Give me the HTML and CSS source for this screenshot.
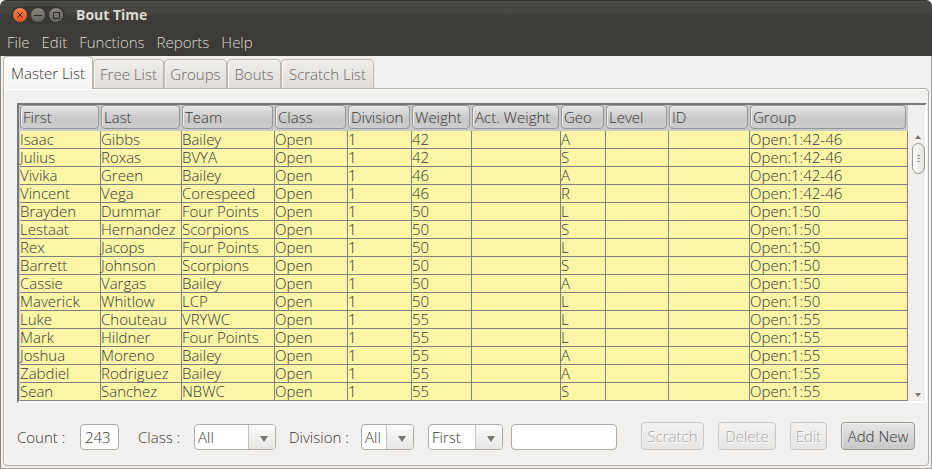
FILE: index.html
```html
<!DOCTYPE html>
<html lang="en">
<head>
<meta charset="utf-8">
<title>Bout Time</title>
<link rel="stylesheet" href="styles.css">
</head>
<body>
<div class="window">
  <header class="chrome">
    <div class="titlebar">
      <div class="controls">
        <button class="control close" aria-label="Close"><svg viewBox="0 0 14 14"><path d="M4.5 4.5l5 5M9.500 4.5l-5 5"/></svg></button>
        <button class="control" aria-label="Minimize"><svg viewBox="0 0 14 14"><path d="M3 7.500h8"/></svg></button>
        <button class="control" aria-label="Maximize"><svg viewBox="0 0 14 14"><path d="M4.5 4.5h6v6h-6z"/></svg></button>
      </div>
      <h1 class="title">Bout Time</h1>
    </div>
    <nav class="menubar">
      <button>File</button><button>Edit</button><button>Functions</button><button>Reports</button><button>Help</button>
    </nav>
  </header>
  <main class="content">
    <div class="tabs" role="tablist">
      <button class="tab active tab-master" role="tab" aria-selected="true">Master List</button>
      <button class="tab tab-free" role="tab">Free List</button>
      <button class="tab tab-groups" role="tab">Groups</button>
      <button class="tab tab-bouts" role="tab">Bouts</button>
      <button class="tab tab-scratch" role="tab">Scratch List</button>
    </div>
    <section class="panel">
      <div class="grid-frame">
        <table class="roster">
          <colgroup>
            <col class="c-name"><col class="c-name"><col class="c-team"><col class="c-class"><col class="c-division"><col class="c-weight"><col class="c-actual"><col class="c-geo"><col class="c-level"><col class="c-id"><col>
          </colgroup>
          <thead>
            <tr><th><button>First</button></th><th><button>Last</button></th><th><button>Team</button></th><th><button>Class</button></th><th><button>Division</button></th><th><button>Weight</button></th><th><button>Act. Weight</button></th><th><button>Geo</button></th><th><button>Level</button></th><th><button>ID</button></th><th><button>Group</button></th></tr>
          </thead>
          <tbody>
            <tr><td>Isaac</td><td>Gibbs</td><td>Bailey</td><td>Open</td><td>1</td><td>42</td><td></td><td>A</td><td></td><td></td><td>Open:1:42-46</td></tr>
            <tr><td>Julius</td><td>Roxas</td><td>BVYA</td><td>Open</td><td>1</td><td>42</td><td></td><td>S</td><td></td><td></td><td>Open:1:42-46</td></tr>
            <tr><td>Vivika</td><td>Green</td><td>Bailey</td><td>Open</td><td>1</td><td>46</td><td></td><td>A</td><td></td><td></td><td>Open:1:42-46</td></tr>
            <tr><td>Vincent</td><td>Vega</td><td>Corespeed</td><td>Open</td><td>1</td><td>46</td><td></td><td>R</td><td></td><td></td><td>Open:1:42-46</td></tr>
            <tr><td>Brayden</td><td>Dummar</td><td>Four Points</td><td>Open</td><td>1</td><td>50</td><td></td><td>L</td><td></td><td></td><td>Open:1:50</td></tr>
            <tr><td>Lestaat</td><td>Hernandez</td><td>Scorpions</td><td>Open</td><td>1</td><td>50</td><td></td><td>S</td><td></td><td></td><td>Open:1:50</td></tr>
            <tr><td>Rex</td><td>Jacops</td><td>Four Points</td><td>Open</td><td>1</td><td>50</td><td></td><td>L</td><td></td><td></td><td>Open:1:50</td></tr>
            <tr><td>Barrett</td><td>Johnson</td><td>Scorpions</td><td>Open</td><td>1</td><td>50</td><td></td><td>S</td><td></td><td></td><td>Open:1:50</td></tr>
            <tr><td>Cassie</td><td>Vargas</td><td>Bailey</td><td>Open</td><td>1</td><td>50</td><td></td><td>A</td><td></td><td></td><td>Open:1:50</td></tr>
            <tr><td>Maverick</td><td>Whitlow</td><td>LCP</td><td>Open</td><td>1</td><td>50</td><td></td><td>L</td><td></td><td></td><td>Open:1:50</td></tr>
            <tr><td>Luke</td><td>Chouteau</td><td>VRYWC</td><td>Open</td><td>1</td><td>55</td><td></td><td>L</td><td></td><td></td><td>Open:1:55</td></tr>
            <tr><td>Mark</td><td>Hildner</td><td>Four Points</td><td>Open</td><td>1</td><td>55</td><td></td><td>L</td><td></td><td></td><td>Open:1:55</td></tr>
            <tr><td>Joshua</td><td>Moreno</td><td>Bailey</td><td>Open</td><td>1</td><td>55</td><td></td><td>A</td><td></td><td></td><td>Open:1:55</td></tr>
            <tr><td>Zabdiel</td><td>Rodriguez</td><td>Bailey</td><td>Open</td><td>1</td><td>55</td><td></td><td>A</td><td></td><td></td><td>Open:1:55</td></tr>
            <tr><td>Sean</td><td>Sanchez</td><td>NBWC</td><td>Open</td><td>1</td><td>55</td><td></td><td>S</td><td></td><td></td><td>Open:1:55</td></tr>
          </tbody>
        </table>
        <div class="scrollbar">
          <button class="step up" aria-label="Scroll up"></button>
          <div class="thumb"><i></i><i></i><i></i></div>
          <button class="step down" aria-label="Scroll down"></button>
        </div>
      </div>
      <form class="toolbar">
        <label class="lbl-count" for="count">Count :</label>
        <input class="field count" id="count" type="text" value="243" readonly>
        <label class="lbl-class" for="class">Class :</label>
        <span class="combo combo-class"><select id="class"><option>All</option></select></span>
        <label class="lbl-division" for="division">Division :</label>
        <span class="combo combo-division"><select id="division"><option>All</option></select></span>
        <span class="combo combo-search"><select aria-label="Search column"><option>First</option></select></span>
        <input class="field search" type="text" aria-label="Search text">
        <div class="actions">
          <button class="action scratch" type="button" disabled>Scratch</button>
          <button class="action delete" type="button" disabled>Delete</button>
          <button class="action edit" type="button" disabled>Edit</button>
          <button class="action add" type="button">Add New</button>
        </div>
      </form>
    </section>
  </main>
</div>
</body>
</html>
```

FILE: styles.css
```css
* { box-sizing: border-box; }

body {
  margin: 0;
  background: #fff;
  color: #383532;
  font: 300 15px/18px "Open Sans", "Noto Sans", sans-serif;
}

button, input, select {
  margin: 0;
  padding: 0;
  border: 0;
  background: none;
  color: inherit;
  font: inherit;
}

.window {
  display: flex;
  flex-direction: column;
  min-height: 100vh;
  overflow: hidden;
  border-radius: 6px 6px 0 0;
  background: #f1f0ee;
}

/* Title bar and menus */
.chrome {
  height: 56px;
  border-top: 1px solid #32312d;
  background: linear-gradient(#5b5a54 0, #484742 1px, #464540 12px, #3c3b37 15px);
  color: #dfdbd2;
}

.titlebar {
  display: flex;
  align-items: center;
  gap: 11px;
  height: 27px;
  padding-left: 11px;
}

.controls {
  display: flex;
  gap: 2px;
  padding: 1px;
  border-radius: 9px;
  background: #383733;
}

.control {
  width: 16px;
  height: 16px;
  border: 1px solid #383733;
  border-radius: 50%;
  background: linear-gradient(#8a8880, #62615b);
}

.control.close { background: linear-gradient(#f58254, #e2531c); }

.control svg {
  display: block;
  width: 14px;
  height: 14px;
  fill: none;
  stroke: #2b2a26;
  stroke-width: 1;
}

.title {
  margin: 0;
  font-size: 14px;
  font-weight: 700;
}

.menubar {
  display: flex;
  gap: 12px;
  padding: 5px 7px 0;
}

/* Tabs */
.content {
  flex: 1;
  display: flex;
  flex-direction: column;
  padding: 0 2px 2px;
  border: 1px solid #a5a19c;
  border-top: 0;
  border-left-color: #8a8680;
}

.tabs {
  display: flex;
  align-items: flex-end;
  height: 33px;
}

.tab {
  height: 30px;
  border: 1px solid #bcb8b3;
  border-radius: 4px 4px 0 0;
  background: linear-gradient(#f0efed, #dedbd8);
  box-shadow: inset 1px 1px #f8f7f6;
  color: #6b6763;
  white-space: nowrap;
}

.tab.active {
  position: relative;
  height: 33px;
  padding-bottom: 1px;
  border-bottom: 0;
  background: linear-gradient(#fff, #f5f4f3);
  color: #383532;
}

.tab-master { width: 90px; }
.tab-free { width: 71px; }
.tab-groups { width: 63px; }
.tab-bouts { width: 54px; }
.tab-scratch { width: 93px; }

.panel {
  flex: 1;
  margin-top: -1px;
  padding: 14px 0 0 13px;
  border: 1px solid #b3afaa;
  border-radius: 0 4px 4px 4px;
  box-shadow: inset 1px 1px #fff;
}

/* Roster */
.grid-frame {
  display: flex;
  margin-right: 1px;
  padding-left: 1px;
  border: 2px solid;
  border-color: #777 #fff #fff #777;
  background: #c8c8c8;
}

.roster {
  flex: 1;
  width: 100%;
  border-spacing: 0;
  table-layout: fixed;
}

.c-name, .c-id { width: 81px; }
.c-team { width: 93px; }
.c-class { width: 73px; }
.c-division { width: 64px; }
.c-weight { width: 60px; }
.c-actual { width: 89px; }
.c-geo { width: 45px; }
.c-level { width: 63px; }

.roster th {
  height: 26px;
  padding: 0 2px 2px 0;
}

.roster th button {
  display: block;
  width: 100%;
  height: 24px;
  padding-left: 2px;
  border: 1px solid #949494;
  border-radius: 4px;
  background: linear-gradient(#e6e6e6, #c6c6c6 60%, #cecece);
  box-shadow: inset 1px 1px #eee;
  font-weight: 300;
  text-align: left;
  white-space: nowrap;
}

.roster td {
  height: 18px;
  padding: 0;
  border: 0 solid #808080;
  border-width: 0 1px 1px 0;
  background: #faf6a6;
  line-height: 17px;
  white-space: nowrap;
}

.scrollbar {
  display: flex;
  flex-direction: column;
  align-items: center;
  width: 17px;
  padding: 30px 0 4px 3px;
  background: #f0efed;
}

.step {
  width: 6px;
  height: 4px;
  background: #77736f;
}

.up { clip-path: polygon(50% 0, 100% 100%, 0 100%); }
.down { margin-top: auto; clip-path: polygon(0 0, 100% 0, 50% 100%); }

.thumb {
  display: flex;
  flex-direction: column;
  align-items: center;
  justify-content: center;
  gap: 2px;
  width: 13px;
  height: 31px;
  margin-top: 4px;
  border: 1px solid #999590;
  border-radius: 7px;
  background: linear-gradient(90deg, #fff, #e4e2df);
}

.thumb i {
  width: 3px;
  height: 1px;
  background: #999590;
}

/* Filters and actions */
.toolbar {
  display: flex;
  align-items: center;
  height: 61px;
  padding: 7px 13px 0 0;
  white-space: nowrap;
}

.lbl-count { width: 63px; }
.lbl-class { width: 56px; }
.lbl-division { width: 72px; }

.field, .combo {
  height: 26px;
  border: 1px solid #aeaaa5;
  border-radius: 4px;
  background: #fff;
}

.field { padding: 0 4px; }
.count { width: 39px; margin-right: 19px; }

.combo {
  display: flex;
  position: relative;
  overflow: hidden;
}

.combo::before {
  content: "";
  position: absolute;
  inset: 0 0 0 auto;
  width: 26px;
  border-left: 1px solid #c4c1bd;
  background: linear-gradient(#fafafa, #e8e7e5);
  pointer-events: none;
}

.combo::after {
  content: "";
  position: absolute;
  top: 11px;
  right: 7px;
  width: 8px;
  height: 6px;
  background: #77736f;
  clip-path: polygon(0 0, 100% 0, 50% 100%);
  pointer-events: none;
}

.combo select {
  width: 100%;
  padding-left: 3px;
  appearance: none;
}

.combo-class { width: 82px; margin-right: 13px; }
.combo-division { width: 53px; margin-right: 14px; }
.combo-search { width: 75px; margin-right: 8px; }
.search { width: 106px; }

.actions {
  display: flex;
  gap: 14px;
  margin-left: auto;
}

.action {
  height: 28px;
  margin-bottom: 2px;
  border: 1px solid #999590;
  border-radius: 4px;
  background: linear-gradient(#e6e6e6, #c8c8c8);
  box-shadow: inset 1px 1px #f0f0f0;
}

.action:disabled {
  border-color: #c9c6c3;
  background: linear-gradient(#f2f1f0, #e6e5e4);
  color: #aaa7a4;
  text-shadow: 1px 1px #fff;
}

.scratch { width: 63px; }
.delete { width: 58px; }
.edit { width: 37px; }
.add { width: 74px; }
```
